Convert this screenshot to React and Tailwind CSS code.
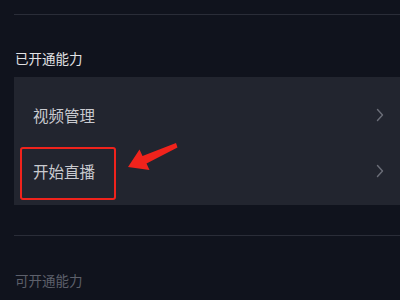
import React from 'react';

const Chevron = () => (
    <svg width="8" height="14" viewBox="0 0 8 14" fill="none">
        <path d="M1.5 1.5 L6.5 7 L1.5 12.5" stroke="#6b6e78" strokeWidth="1.4" strokeLinecap="round" strokeLinejoin="round" />
    </svg>
);

const Row = ({ label }) => (
    <div className="h-[56px] flex items-center justify-between pl-[19px] pr-[16px]">
        <span className="text-[15.5px] leading-[20px] text-[#c9cacf]">{label}</span>
        <Chevron />
    </div>
);

const App = () => {
    return (
        <div
            className="relative w-[400px] h-[300px] overflow-hidden bg-[#10131d] pl-[14px]"
            style={{ fontFamily: '"Noto Sans CJK SC", "Noto Sans", sans-serif' }}
        >
            <div className="pt-[14px]">
                <div className="h-px bg-[#2a2d38]" />
            </div>

            <div className="mt-[33px] pl-px text-[13.5px] leading-[20px] text-[#e2e2e5]">已开通能力</div>

            <div className="relative mt-[9px] bg-[#22252f] pt-[10px] pb-[6px]">
                <Row label="视频管理" />
                <Row label="开始直播" />
                {/* red highlight box */}
                <div className="absolute left-[6px] top-[70px] w-[96px] h-[53px] border-2 border-[#f0231c] rounded-[3px]" />
            </div>

            <div className="mt-[30px] h-px bg-[#2a2d38]" />

            <div className="mt-[34px] pl-px text-[13.5px] leading-[20px] text-[#5d606b]">可开通能力</div>

            {/* annotation arrow */}
            <svg className="absolute left-0 top-0" width="400" height="300" viewBox="0 0 400 300">
                <polygon
                    points="128,167 139.5,149.5 142.5,156 176,143 177.5,147.5 146.5,163.5 149.5,170"
                    fill="#f0231c"
                />
            </svg>
        </div>
    );
};

export default App;
